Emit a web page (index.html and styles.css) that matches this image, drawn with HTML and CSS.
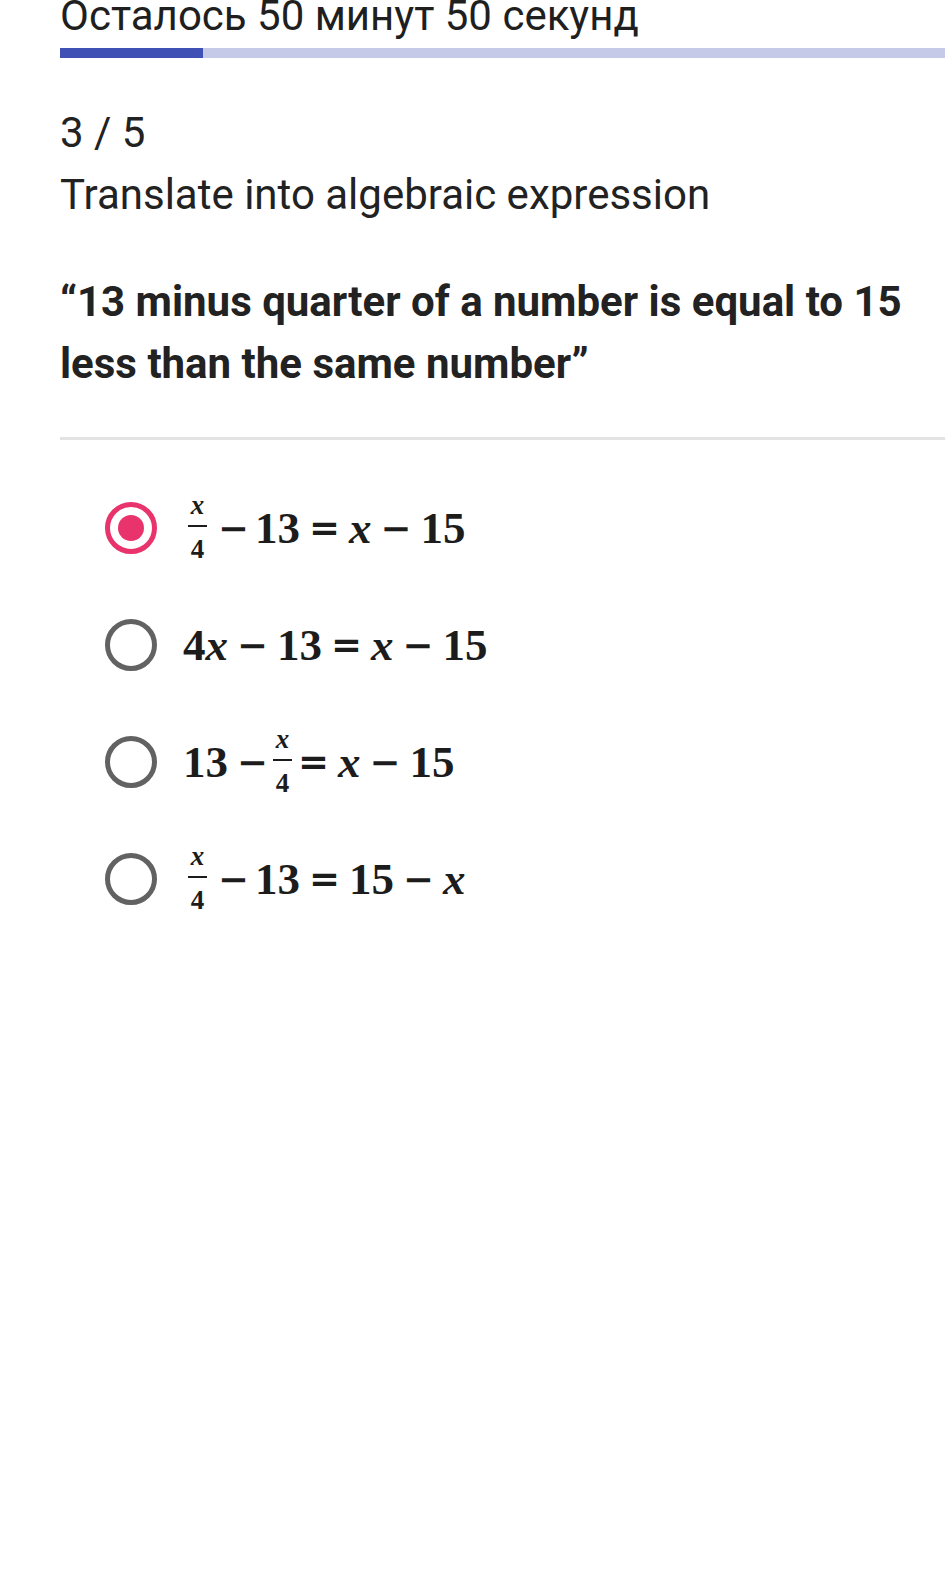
FILE: index.html
```html
<!DOCTYPE html>
<html lang="ru">
<head>
<meta charset="utf-8">
<title>Quiz</title>
<link rel="stylesheet" href="styles.css">
</head>
<body>
<div class="page">
  <div class="timer">Осталось 50 минут 50 секунд</div>
  <div class="progress"><div class="progress-fill" style="width: 143px"></div></div>
  <div class="counter">3 / 5</div>
  <div class="title">Translate into algebraic expression</div>
  <div class="question">“13 minus quarter of a number is equal to 15 less than the same number”</div>
  <div class="divider"></div>
  <div class="options">
    <label class="option">
      <span class="radio radio-checked"><span class="radio-dot"></span></span>
      <span class="math"><span class="frac frac-lead"><span class="num">x</span><span class="den">4</span></span><span class="op op-after">−</span>13<span class="op">=</span><i>x</i><span class="op">−</span>15</span>
    </label>
    <label class="option">
      <span class="radio"></span>
      <span class="math">4<i>x</i><span class="op">−</span>13<span class="op">=</span><i>x</i><span class="op">−</span>15</span>
    </label>
    <label class="option">
      <span class="radio"></span>
      <span class="math">13<span class="op op-left">−</span><span class="frac"><span class="num">x</span><span class="den">4</span></span><span class="op op-right">=</span><i>x</i><span class="op">−</span>15</span>
    </label>
    <label class="option">
      <span class="radio"></span>
      <span class="math"><span class="frac frac-lead"><span class="num">x</span><span class="den">4</span></span><span class="op op-after">−</span>13<span class="op">=</span>15<span class="op">−</span><i>x</i></span>
    </label>
  </div>
</div>
</body>
</html>
```

FILE: styles.css
```css
* { box-sizing: border-box; }

html, body {
  margin: 0;
  padding: 0;
  background: #ffffff;
}

.page {
  padding-left: 60px;
  font-family: Roboto, "Noto Sans", sans-serif;
  color: #202124;
}

.timer {
  font-size: 42px;
  line-height: 32px;
  white-space: nowrap;
  color: #1f1f1f;
}

.progress {
  margin-top: 16px;
  height: 10px;
  background: #c5cae9;
}

.progress-fill {
  height: 100%;
  background: #3f51b5;
}

.counter,
.title {
  font-size: 42px;
  line-height: 62px;
  color: #222222;
}

.counter {
  margin-top: 44px;
}

.question {
  margin-top: 45px;
  font-size: 42px;
  line-height: 62px;
  font-weight: 700;
  color: #222222;
  padding-right: 30px;
}

.divider {
  margin-top: 42px;
  height: 3px;
  background: #e3e3e3;
}

.options {
  padding-top: 29px;
  padding-left: 45px;
}

.option {
  display: flex;
  align-items: center;
  height: 117px;
}

.radio {
  flex: none;
  width: 52px;
  height: 52px;
  border-radius: 50%;
  border: 5px solid #626262;
  display: flex;
  align-items: center;
  justify-content: center;
  margin-right: 26px;
}

.radio-checked {
  border-color: #e8336d;
}

.radio-dot {
  width: 26px;
  height: 26px;
  border-radius: 50%;
  background: #e8336d;
}

.math {
  font-family: "Liberation Serif", "Times New Roman", serif;
  font-weight: 700;
  font-size: 45px;
  color: #1c1c1c;
  display: flex;
  align-items: center;
  white-space: nowrap;
}

.math i {
  font-style: italic;
  font-weight: 700;
}

.op {
  font-family: "DejaVu Serif", serif;
  font-size: 37px;
  padding: 0 9px;
}

.op-after {
  padding: 0 6px 0 11px;
}

.op-left {
  padding: 0 5px 0 9px;
}

.op-right {
  padding: 0 9px 0 6px;
}

.frac {
  display: inline-flex;
  flex-direction: column;
  align-items: stretch;
  font-size: 27px;
  width: 19px;
}

.frac-lead {
  margin-left: 5px;
}

.num,
.den {
  display: block;
  text-align: center;
  line-height: 24px;
}

.num {
  font-style: italic;
  height: 34.5px;
  padding-bottom: 8px;
  border-bottom: 2.5px solid #1c1c1c;
}

.den {
  height: 35px;
  padding-top: 10px;
}
```
